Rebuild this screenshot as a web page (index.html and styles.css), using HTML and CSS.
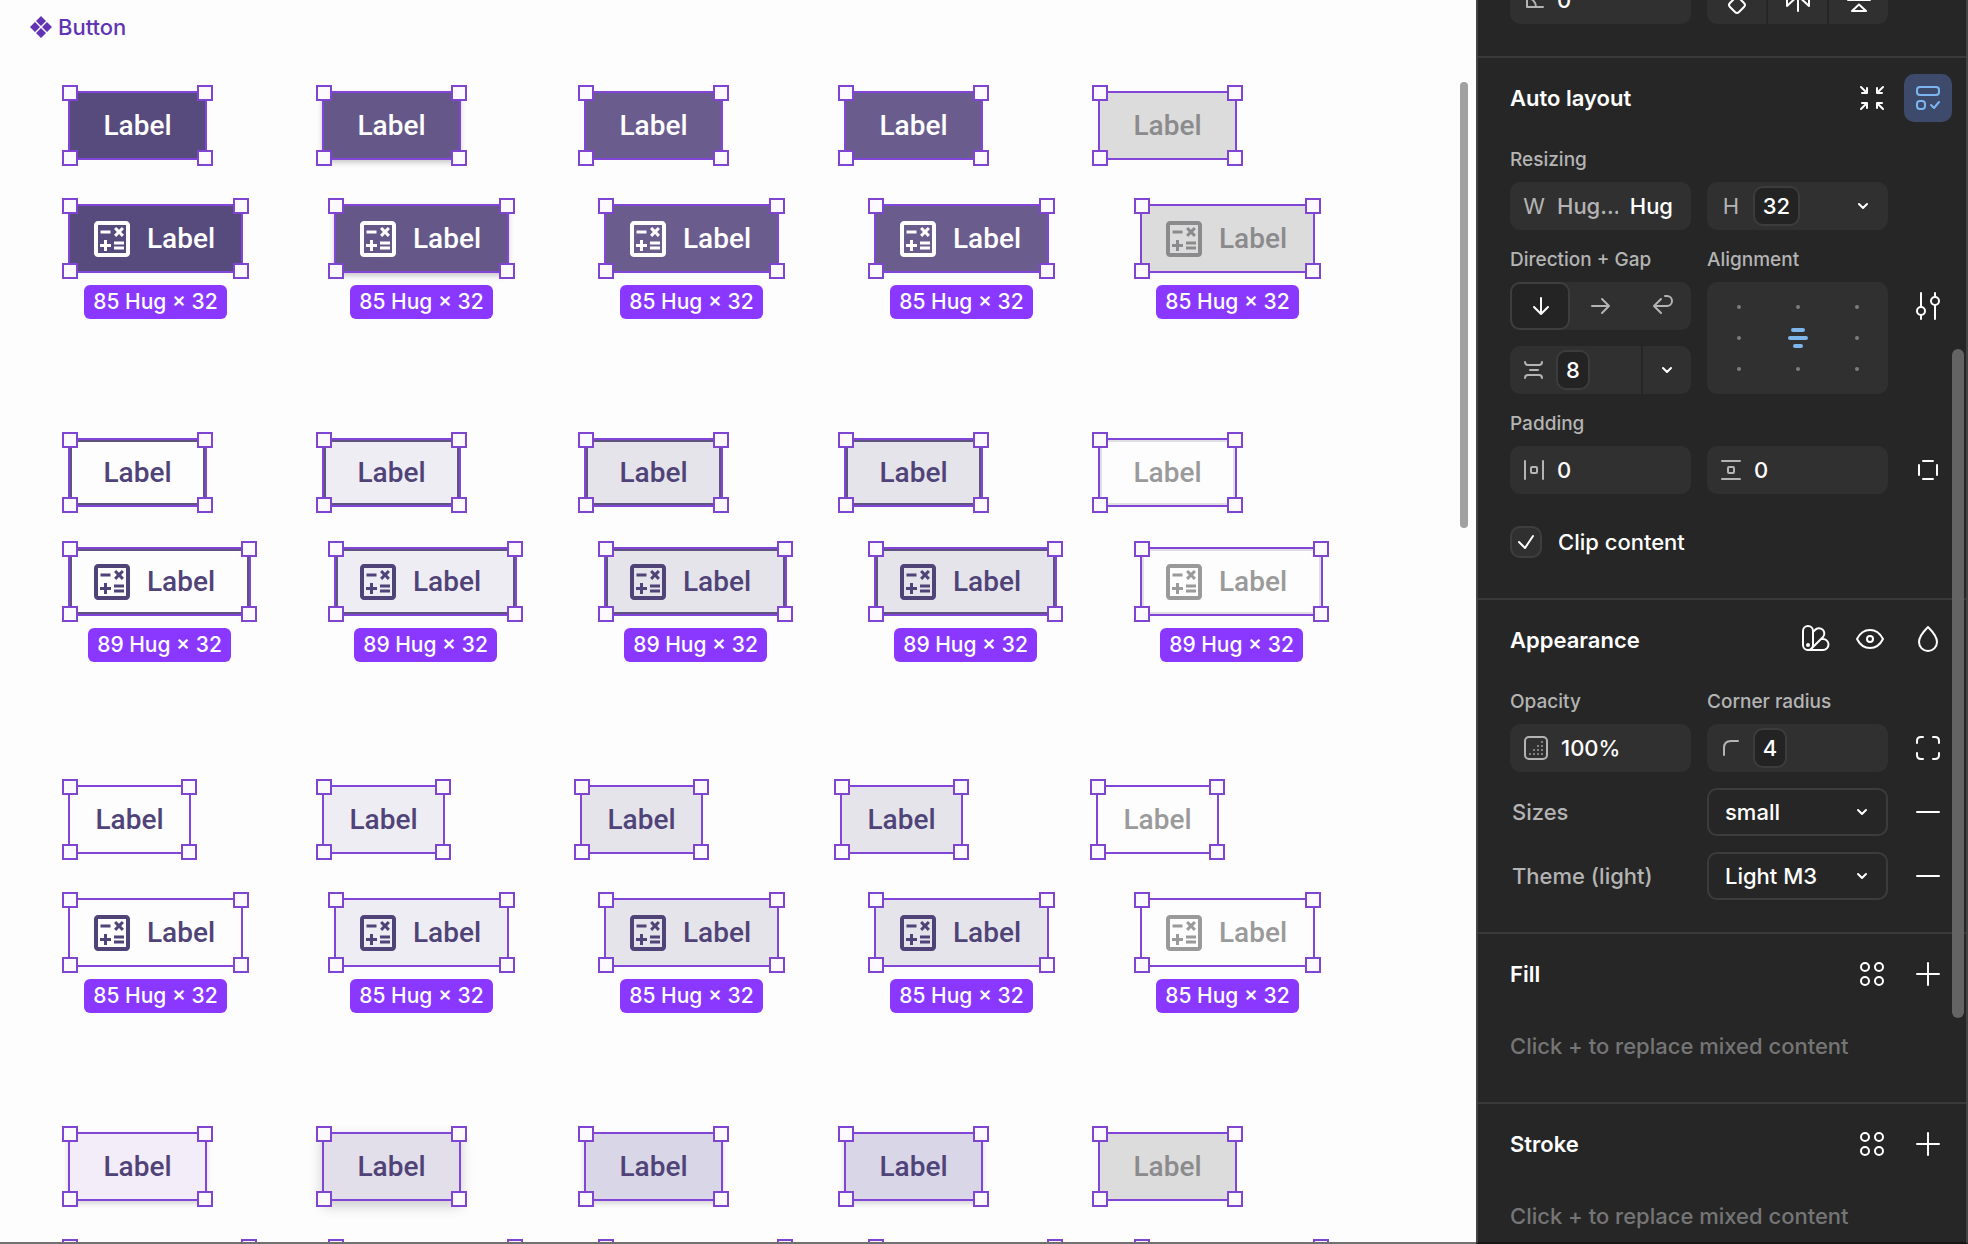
FILE: index.html
```
<!DOCTYPE html>
<html lang="en">
<head>
  <meta charset="UTF-8">
  <meta name="viewport" content="width=device-width, initial-scale=1.0">
  <title>Button component</title>
  <link rel="stylesheet" href="styles.css">
</head>
<body>
  <!-- shared icons -->
  <svg class="sprite" aria-hidden="true">
    <symbol id="calc" viewBox="3 3 18 18">
      <path fill="currentColor" d="M19 3H5c-1.100 0-2 .9-2 2v14c0 1.100.9 2 2 2h14c1.100 0 2-.9 2-2V5c0-1.100-.9-2-2-2zm0 16H5V5h14v14z"/>
      <path fill="currentColor" d="M6.250 7.720h5v1.500h-5zM13 15.750h5v1.500h-5zM13 13.250h5v1.500h-5zM8 18h1.500v-2h2v-1.500h-2v-2H8v2H6V16h2zM14.090 10.950l1.410-1.410 1.410 1.410 1.060-1.060-1.410-1.420 1.410-1.410L16.910 6 15.500 7.410 14.090 6l-1.060 1.060 1.410 1.410-1.410 1.420z"/>
    </symbol>
    <symbol id="chevron" viewBox="0 0 12 8"><path d="M2 2l4 4 4-4"/></symbol>
    <symbol id="styles" viewBox="0 0 48 48"><circle cx="17" cy="17" r="4"/><circle cx="31" cy="17" r="4"/><circle cx="17" cy="31" r="4"/><circle cx="31" cy="31" r="4"/></symbol>
    <symbol id="plus" viewBox="0 0 48 48"><path d="M13 24h22M24 13v22"/></symbol>
    <symbol id="minus" viewBox="0 0 48 48"><path d="M13 24h22"/></symbol>
  </svg>

  <div class="app">
    <main class="canvas">
      <h1 class="frame-name">
        <svg width="22" height="22" viewBox="0 0 22 22"><path fill="currentColor" d="M11 0l5 5-5 5-5-5zM5 6l5 5-5 5-5-5zM17 6l5 5-5 5-5-5zM11 12l5 5-5 5-5-5z"/></svg>
        Button
      </h1>

      <section class="group filled">
        <div class="row row-text">
          <div class="node"><button class="btn">Label</button></div>
          <div class="node"><button class="btn hover">Label</button></div>
          <div class="node"><button class="btn focus">Label</button></div>
          <div class="node"><button class="btn pressed">Label</button></div>
          <div class="node"><button class="btn disabled">Label</button></div>
        </div>
        <div class="row row-icon">
          <div class="node"><button class="btn with-icon"><svg><use href="#calc"/></svg>Label</button><span class="tag">85 Hug × 32</span></div>
          <div class="node"><button class="btn with-icon hover"><svg><use href="#calc"/></svg>Label</button><span class="tag">85 Hug × 32</span></div>
          <div class="node"><button class="btn with-icon focus"><svg><use href="#calc"/></svg>Label</button><span class="tag">85 Hug × 32</span></div>
          <div class="node"><button class="btn with-icon pressed"><svg><use href="#calc"/></svg>Label</button><span class="tag">85 Hug × 32</span></div>
          <div class="node"><button class="btn with-icon disabled"><svg><use href="#calc"/></svg>Label</button><span class="tag">85 Hug × 32</span></div>
        </div>
      </section>

      <section class="group outlined">
        <div class="row row-text">
          <div class="node"><button class="btn">Label</button></div>
          <div class="node"><button class="btn hover">Label</button></div>
          <div class="node"><button class="btn focus">Label</button></div>
          <div class="node"><button class="btn pressed">Label</button></div>
          <div class="node"><button class="btn disabled">Label</button></div>
        </div>
        <div class="row row-icon">
          <div class="node"><button class="btn with-icon wide"><svg><use href="#calc"/></svg>Label</button><span class="tag">89 Hug × 32</span></div>
          <div class="node"><button class="btn with-icon wide hover"><svg><use href="#calc"/></svg>Label</button><span class="tag">89 Hug × 32</span></div>
          <div class="node"><button class="btn with-icon wide focus"><svg><use href="#calc"/></svg>Label</button><span class="tag">89 Hug × 32</span></div>
          <div class="node"><button class="btn with-icon wide pressed"><svg><use href="#calc"/></svg>Label</button><span class="tag">89 Hug × 32</span></div>
          <div class="node"><button class="btn with-icon wide disabled"><svg><use href="#calc"/></svg>Label</button><span class="tag">89 Hug × 32</span></div>
        </div>
      </section>

      <section class="group text">
        <div class="row row-narrow">
          <div class="node"><button class="btn narrow">Label</button></div>
          <div class="node"><button class="btn narrow hover">Label</button></div>
          <div class="node"><button class="btn narrow focus">Label</button></div>
          <div class="node"><button class="btn narrow pressed">Label</button></div>
          <div class="node"><button class="btn narrow disabled">Label</button></div>
        </div>
        <div class="row row-icon">
          <div class="node"><button class="btn with-icon"><svg><use href="#calc"/></svg>Label</button><span class="tag">85 Hug × 32</span></div>
          <div class="node"><button class="btn with-icon hover"><svg><use href="#calc"/></svg>Label</button><span class="tag">85 Hug × 32</span></div>
          <div class="node"><button class="btn with-icon focus"><svg><use href="#calc"/></svg>Label</button><span class="tag">85 Hug × 32</span></div>
          <div class="node"><button class="btn with-icon pressed"><svg><use href="#calc"/></svg>Label</button><span class="tag">85 Hug × 32</span></div>
          <div class="node"><button class="btn with-icon disabled"><svg><use href="#calc"/></svg>Label</button><span class="tag">85 Hug × 32</span></div>
        </div>
      </section>

      <section class="group elevated">
        <div class="row row-text">
          <div class="node"><button class="btn">Label</button></div>
          <div class="node"><button class="btn hover">Label</button></div>
          <div class="node"><button class="btn focus">Label</button></div>
          <div class="node"><button class="btn pressed">Label</button></div>
          <div class="node"><button class="btn disabled">Label</button></div>
        </div>
        <div class="row row-icon">
          <div class="node"><button class="btn wide" aria-label="Enabled"></button></div>
          <div class="node"><button class="btn wide" aria-label="Hovered"></button></div>
          <div class="node"><button class="btn wide" aria-label="Focused"></button></div>
          <div class="node"><button class="btn wide" aria-label="Pressed"></button></div>
          <div class="node"><button class="btn wide" aria-label="Disabled"></button></div>
        </div>
      </section>
      <div class="scrollbar canvas-scroll"></div>
    </main>

    <aside class="panel">
      <section class="section section-top">
        <div class="grid">
          <label class="field">
            <svg class="glyph" viewBox="0 0 20 20"><path d="M3 2v15h16M3 8c5 0 9 4 9 9"/></svg>
            <input type="text" value="0" aria-label="Rotation">
          </label>
          <div class="split split-three">
            <button aria-label="Rotate 90"><svg viewBox="0 0 48 48"><path d="M22 22l-5 5q-2 2 0 4l5 5q2 2 4 0l5-5q2-2 0-4l-5-5"/></svg></button>
            <button aria-label="Flip horizontal"><svg viewBox="0 0 48 48"><path d="M24 12v23M13 17v13l7-6.500zM35 17v13l-7-6.500z"/></svg></button>
            <button aria-label="Flip vertical"><svg viewBox="0 0 48 48"><path d="M13 24h22M24 28.500l7 6.500H17z"/></svg></button>
          </div>
        </div>
      </section>

      <section class="section">
        <header class="section-head">
          <h2>Auto layout</h2>
          <button class="icon-btn" aria-label="Resize to fit"><svg viewBox="0 0 48 48"><path d="M13 13l6 6M19 14v5h-5M35 13l-6 6M29 14v5h5M13 35l6-6M14 29h5v5M35 35l-6-6M34 29h-5v5"/></svg></button>
          <button class="icon-btn active" aria-label="Remove auto layout"><svg viewBox="0 0 48 48"><rect x="13" y="13" width="22" height="8" rx="3"/><rect x="13" y="27" width="8" height="8" rx="3"/><path d="M27 31l3 3 5-6"/></svg></button>
        </header>

        <div class="grid">
          <span class="caption">Resizing</span>
          <label class="field first">
            <span class="glyph letter">W</span>
            <input type="text" class="dim" value="Hug..." aria-label="Width"><b>Hug</b>
          </label>
          <label class="field">
            <span class="glyph letter">H</span>
            <input type="text" class="chip chip-wide" value="32" aria-label="Height">
            <svg class="chevron"><use href="#chevron"/></svg>
          </label>
        </div>

        <div class="grid next">
          <span class="caption half">Direction + Gap</span>
          <span class="caption half">Alignment</span>
          <div class="stack first">
            <div class="segments">
              <button class="on" aria-label="Vertical"><svg viewBox="0 0 24 24"><path d="M13 4v16M6 13l7 7 7-7"/></svg></button>
              <button aria-label="Horizontal"><svg viewBox="0 0 24 24"><path d="M4 12h17M14 5l7 7-7 7"/></svg></button>
              <button aria-label="Wrap"><svg viewBox="0 0 24 24"><path d="M5 12h13a5 5 0 0 0 0-10h-2M12 5l-7 7 7 7"/></svg></button>
            </div>
            <div class="split split-gap">
              <label class="field">
                <svg class="glyph" viewBox="0 0 20 20"><path d="M1 2q0 3 3 3h11q3 0 3-3M6 10h8M1 18q0-3 3-3h11q3 0 3 3"/></svg>
                <input type="text" class="chip" value="8" aria-label="Gap">
              </label>
              <button aria-label="Gap options"><svg class="chevron"><use href="#chevron"/></svg></button>
            </div>
          </div>
          <div class="align">
            <button aria-label="Top left"></button><button aria-label="Top center"></button><button aria-label="Top right"></button>
            <button aria-label="Left"></button>
            <button class="current" aria-label="Center"><svg viewBox="0 0 20 20"><path d="M5 2h10M2 10h16M7 18h6"/></svg></button>
            <button aria-label="Right"></button>
            <button aria-label="Bottom left"></button><button aria-label="Bottom center"></button><button aria-label="Bottom right"></button>
          </div>
          <button class="icon-btn" aria-label="Layout settings"><svg viewBox="0 0 48 48"><path d="M17 11v14M17 33v4M31 11v4M31 23v14"/><circle cx="17" cy="29" r="4"/><circle cx="31" cy="19" r="4"/></svg></button>
        </div>

        <div class="grid next">
          <span class="caption">Padding</span>
          <label class="field first">
            <svg class="glyph" viewBox="0 0 20 20"><path d="M1 1v18M19 1v18"/><rect x="7" y="7" width="6" height="6" rx="1"/></svg>
            <input type="text" value="0" aria-label="Horizontal padding">
          </label>
          <label class="field">
            <svg class="glyph" viewBox="0 0 20 20"><path d="M1 1h18M1 19h18"/><rect x="7" y="7" width="6" height="6" rx="1"/></svg>
            <input type="text" value="0" aria-label="Vertical padding">
          </label>
          <button class="icon-btn" aria-label="Individual padding"><svg viewBox="0 0 48 48"><path d="M19 15h10M19 33h10M15 19v10M33 19v10"/></svg></button>
        </div>

        <label class="check">
          <span class="box"><input type="checkbox" checked><svg viewBox="0 0 32 32"><path d="M9 16l6 6 8-12"/></svg></span>
          Clip content
        </label>
      </section>

      <section class="section">
        <header class="section-head">
          <h2>Appearance</h2>
          <button class="icon-btn" aria-label="Apply variable mode"><svg viewBox="0 0 48 48"><rect x="11" y="10" width="10" height="24" rx="5"/><path d="M21 16l2-2a5 5 0 0 1 8 7L19 33M29 23h2a5 5 0 0 1 0 11H16"/><circle cx="16" cy="29" r="1"/></svg></button>
          <button class="icon-btn" aria-label="Toggle visibility"><svg viewBox="0 0 48 48"><path d="M9 23c3-6 8-9 13-9s10 3 13 9c-3 6-8 9-13 9s-10-3-13-9z"/><circle cx="22" cy="23" r="3"/></svg></button>
          <button class="icon-btn" aria-label="Blend mode"><svg viewBox="0 0 48 48"><path d="M24 11c-4 4-9 9-9 15a9 9 0 0 0 18 0c0-6-5-11-9-15z"/></svg></button>
        </header>

        <div class="grid">
          <span class="caption half">Opacity</span>
          <span class="caption half">Corner radius</span>
          <label class="field first">
            <svg class="glyph glyph-large" viewBox="0 0 24 24"><rect x="1" y="1" width="22" height="22" rx="4"/><path class="dots" d="M5 18h14M9 14h10M13 10h6M17 6h2"/></svg>
            <input type="text" value="100%" aria-label="Opacity">
          </label>
          <label class="field">
            <svg class="glyph" viewBox="0 0 20 20"><path d="M3 17v-7q0-7 7-7h7"/></svg>
            <input type="text" class="chip" value="4" aria-label="Corner radius">
          </label>
          <button class="icon-btn" aria-label="Individual corners"><svg viewBox="0 0 48 48"><path d="M13 19v-2q0-4 4-4h2M29 13h2q4 0 4 4v2M35 29v2q0 4-4 4h-2M19 35h-2q-4 0-4-4v-2"/></svg></button>
        </div>

        <div class="grid mode">
          <label for="sizes">Sizes</label>
          <div class="select"><select id="sizes"><option>small</option></select><svg class="chevron"><use href="#chevron"/></svg></div>
          <button class="icon-btn" aria-label="Remove sizes"><svg><use href="#minus"/></svg></button>
        </div>
        <div class="grid mode">
          <label for="theme">Theme (light)</label>
          <div class="select"><select id="theme"><option>Light M3</option></select><svg class="chevron"><use href="#chevron"/></svg></div>
          <button class="icon-btn" aria-label="Remove theme"><svg><use href="#minus"/></svg></button>
        </div>
      </section>

      <section class="section">
        <header class="section-head">
          <h2>Fill</h2>
          <button class="icon-btn" aria-label="Fill styles"><svg><use href="#styles"/></svg></button>
          <button class="icon-btn" aria-label="Add fill"><svg><use href="#plus"/></svg></button>
        </header>
        <p class="hint">Click + to replace mixed content</p>
      </section>

      <section class="section">
        <header class="section-head">
          <h2>Stroke</h2>
          <button class="icon-btn" aria-label="Stroke styles"><svg><use href="#styles"/></svg></button>
          <button class="icon-btn" aria-label="Add stroke"><svg><use href="#plus"/></svg></button>
        </header>
        <p class="hint">Click + to replace mixed content</p>
      </section>
      <div class="scrollbar panel-scroll"></div>
    </aside>
  </div>
</body>
</html>
```

FILE: styles.css
```
* {
  box-sizing: border-box;
}
body {
  margin: 0;
  font-family: Inter, sans-serif;
  font-size: 22px;
  font-weight: 500;
  background: #fdfdfd;
}
button,
input,
select {
  font: inherit;
  color: inherit;
  margin: 0;
  padding: 0;
  border: none;
  background: none;
}
h1,
h2,
p {
  margin: 0;
}
.sprite {
  display: none;
}
.app {
  display: flex;
  height: 100vh;
  overflow: hidden;
}

/* canvas */
.canvas {
  position: relative;
  flex: 1;
  min-width: 0;
  padding: 11px 0 0 68px;
  overflow: hidden;
}
.canvas::after {
  content: "";
  position: absolute;
  left: 0;
  right: 0;
  bottom: 0;
  height: 2px;
  background: #717173;
}
.frame-name {
  display: flex;
  align-items: center;
  gap: 6px;
  height: 32px;
  margin: 0 0 48px -38px;
  font-size: 22px;
  font-weight: 500;
  color: #6234b4;
}
.group {
  margin-bottom: 119px;
}
.row {
  display: grid;
  justify-items: start;
}
.row + .row {
  margin-top: 44px;
}
.row-text {
  grid-template-columns: 254px 262px 260px 254px auto;
}
.row-icon {
  grid-template-columns: 266px 270px 270px 266px auto;
}
.row-narrow {
  grid-template-columns: 254px 258px 260px 256px auto;
}
.node {
  display: flex;
  flex-direction: column;
  align-items: center;
  gap: 12px;
}
.btn {
  position: relative;
  display: flex;
  align-items: center;
  justify-content: center;
  gap: 17px;
  width: 139px;
  height: 69px;
  border: 2px solid #8146d8;
  font-family: Roboto, sans-serif;
  font-size: 28px;
  color: #4f4378;
}
.btn svg {
  width: 36px;
  height: 36px;
}
.btn.narrow {
  width: 123px;
}
.btn.with-icon {
  width: 175px;
  justify-content: flex-start;
  padding-left: 24px;
}
.btn.wide {
  width: 183px;
}
/* the four resize handles */
.btn::after {
  content: "";
  position: absolute;
  inset: -8px;
  background:
    linear-gradient(#fcfaff, #fcfaff) left 2px top 2px / 12px 12px,
    linear-gradient(#fcfaff, #fcfaff) right 2px top 2px / 12px 12px,
    linear-gradient(#fcfaff, #fcfaff) left 2px bottom 2px / 12px 12px,
    linear-gradient(#fcfaff, #fcfaff) right 2px bottom 2px / 12px 12px,
    linear-gradient(#7f45d0, #7f45d0) left top / 16px 16px,
    linear-gradient(#7f45d0, #7f45d0) right top / 16px 16px,
    linear-gradient(#7f45d0, #7f45d0) left bottom / 16px 16px,
    linear-gradient(#7f45d0, #7f45d0) right bottom / 16px 16px;
  background-repeat: no-repeat;
}
.tag {
  padding: 0 9px;
  border-radius: 6px;
  font-size: 21px;
  line-height: 34px;
  color: #fff;
  background: #8a38ff;
  white-space: nowrap;
}

.filled .btn {
  color: #fff;
  background: #574a7d;
}
.filled .hover {
  background: #655889;
  box-shadow: 0 3px 5px rgba(0, 0, 0, 0.2);
}
.filled .focus,
.filled .pressed {
  background: #6b5c8e;
}
.filled .disabled,
.elevated .disabled {
  color: #8b8b8d;
  background: #dcdcdc;
}
.outlined {
  margin-bottom: 123px;
}
.outlined .row + .row {
  margin-top: 40px;
}
.outlined .btn {
  box-shadow: inset 0 0 0 2px #5f5480;
}
.outlined .hover,
.text .hover {
  background: #efedf4;
}
.outlined .focus,
.outlined .pressed,
.text .focus,
.text .pressed {
  background: #e5e4eb;
}
.outlined .disabled,
.text .disabled {
  color: #9a9a9b;
}
.outlined .disabled {
  box-shadow: inset 0 0 0 2px #e0dfe4;
}
.elevated .btn {
  background: #f3edf9;
  box-shadow: 0 3px 5px rgba(0, 0, 0, 0.15);
}
.elevated .hover {
  background: #e2dfea;
  box-shadow: 0 5px 12px rgba(0, 0, 0, 0.2);
}
.elevated .focus,
.elevated .pressed {
  background: #d9d6e7;
}
.elevated .disabled {
  background: #dcdcdc;
  box-shadow: none;
}

.scrollbar {
  position: absolute;
  border-radius: 6px;
}
.canvas-scroll {
  top: 82px;
  right: 8px;
  width: 8px;
  height: 446px;
  background: #a1a1a2;
}

/* properties panel */
.panel {
  position: relative;
  flex: none;
  width: 492px;
  border: 2px solid #444;
  border-top: none;
  border-bottom-color: #161616;
  overflow: hidden;
  color: #fff;
  background: #262626;
}
.panel-scroll {
  top: 349px;
  right: 2px;
  width: 12px;
  height: 669px;
  background: #646464;
}
.panel svg {
  fill: none;
  stroke: currentColor;
  stroke-width: 2;
  stroke-linecap: round;
  stroke-linejoin: round;
}
.section {
  padding: 16px 14px 32px 32px;
  border-bottom: 2px solid #3a3a3a;
}
.section-top {
  margin-top: -24px;
  padding-top: 0;
}
.section-head {
  display: flex;
  align-items: center;
  gap: 8px;
  margin-bottom: 16px;
}
.section-head h2 {
  flex: 1;
  font-size: 22px;
  font-weight: 600;
}
.icon-btn {
  width: 48px;
  height: 48px;
  border-radius: 10px;
}
.icon-btn svg {
  display: block;
  width: 48px;
  height: 48px;
}
.icon-btn.active {
  color: #7cb6f2;
  background: #3e4a6b;
}
.grid {
  display: grid;
  grid-template-columns: 1fr 1fr 48px;
  column-gap: 16px;
}
.grid.next {
  margin-top: 8px;
}
.caption {
  grid-column: 1 / -1;
  font-size: 19px;
  line-height: 44px;
  color: #b4b4b4;
}
.caption.half {
  grid-column: auto;
}
.first {
  grid-column: 1;
}
.field {
  display: flex;
  align-items: center;
  gap: 12px;
  min-width: 0;
  height: 48px;
  padding-left: 14px;
  border-radius: 10px;
  background: #303030;
}
.field input {
  flex: 1;
  min-width: 0;
  height: 40px;
  padding-left: 1px;
}
.field b {
  margin-right: 18px;
  font-weight: 500;
}
.glyph {
  flex: none;
  width: 20px;
  height: 20px;
  color: #b4b4b4;
}
.glyph-large {
  width: 24px;
  height: 24px;
}
.panel .dots {
  stroke-linecap: butt;
  stroke-dasharray: 2 2;
  opacity: 0.6;
}
.letter {
  display: flex;
  align-items: center;
  justify-content: center;
  font-weight: 400;
}
.dim {
  color: #b4b4b4;
}
.field .chip {
  flex: none;
  width: 34px;
  padding: 0;
  border: 2px solid #3c3c3c;
  border-radius: 10px;
  text-align: center;
  background: #232323;
}
.field .chip-wide {
  width: 47px;
}
.chevron {
  width: 12px;
  height: 8px;
}
.field .chevron {
  margin: 0 19px 0 auto;
}
.split {
  display: grid;
  gap: 2px;
  height: 48px;
  border-radius: 10px;
  overflow: hidden;
}
.split-three {
  grid-template-columns: 1fr 1fr 1fr;
}
.split-gap {
  grid-template-columns: 1fr 48px;
}
.split > * {
  border-radius: 0;
  background: #303030;
}
.split button {
  display: flex;
  align-items: center;
  justify-content: center;
}
.split-three svg {
  width: 48px;
  height: 48px;
}
.stack {
  display: grid;
  gap: 16px;
}
.segments {
  display: grid;
  grid-template-columns: 1fr 1fr 1fr;
  height: 48px;
  border-radius: 10px;
  color: #b4b4b4;
  background: #303030;
}
.segments button {
  display: flex;
  align-items: center;
  justify-content: center;
}
.segments svg {
  width: 24px;
  height: 24px;
}
.segments .on {
  border: 2px solid #3e3e3e;
  border-radius: 10px;
  color: #fff;
  background: #242424;
}
.align {
  display: grid;
  grid-template-columns: repeat(3, 1fr);
  grid-template-rows: repeat(3, 1fr);
  height: 112px;
  padding: 10px 2px;
  border-radius: 10px;
  background: #303030;
}
.align button {
  display: flex;
  align-items: center;
  justify-content: center;
}
.align button:not(.current)::before {
  content: "";
  width: 4px;
  height: 4px;
  border-radius: 2px;
  background: #7c7c7c;
}
.align svg {
  width: 20px;
  height: 20px;
  color: #7cb6ea;
  stroke-width: 4;
}
.check {
  display: flex;
  align-items: center;
  gap: 16px;
  height: 48px;
  margin-top: 24px;
}
.box {
  position: relative;
  width: 32px;
  height: 32px;
}
.box input {
  appearance: none;
  display: block;
  width: 32px;
  height: 32px;
  border: 2px solid #3e3e3e;
  border-radius: 10px;
  background: #303030;
}
.box svg {
  position: absolute;
  inset: 0;
}
.mode {
  align-items: center;
  margin-top: 16px;
}
.mode label {
  padding-left: 2px;
  color: #b4b4b4;
  white-space: nowrap;
}
.select {
  position: relative;
}
.select select {
  appearance: none;
  display: block;
  width: 100%;
  height: 48px;
  padding-left: 16px;
  border: 2px solid #3c3c3c;
  border-radius: 10px;
}
.select .chevron {
  position: absolute;
  top: 20px;
  right: 20px;
  pointer-events: none;
}
.hint {
  margin-top: 24px;
  line-height: 48px;
  color: #757575;
}
```
